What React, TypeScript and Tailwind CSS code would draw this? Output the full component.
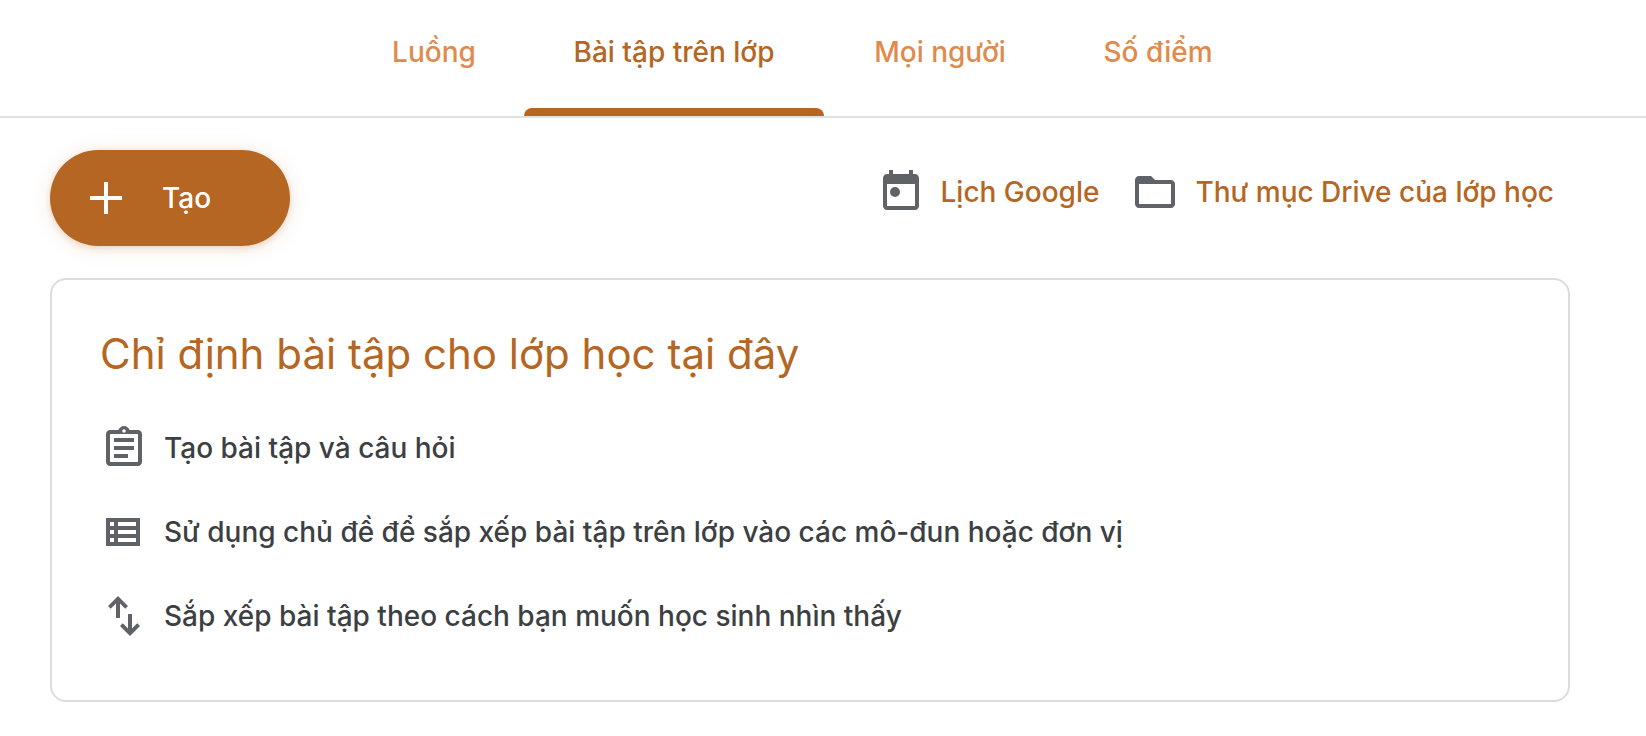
import React from "react";

type IconProps = { children: React.ReactNode };

function Icon({ children }: IconProps) {
  return (
    <svg viewBox="0 0 24 24" className="size-12 shrink-0 fill-[#5f6368]" fillRule="evenodd" aria-hidden="true">
      {children}
    </svg>
  );
}

const tabs = [
  { label: "Luồng", width: "w-[180px]", active: false },
  { label: "Bài tập trên lớp", width: "w-[300px]", active: true },
  { label: "Mọi người", width: "w-[232px]", active: false },
  { label: "Số điểm", width: "w-[204px]", active: false },
];

const links = [
  {
    label: "Lịch Google",
    icon: (
      <>
        <path d="M19 3h-1V1h-2v2H8V1H6v2H5c-1.1 0-2 .9-2 2v14c0 1.1.9 2 2 2h14c1.1 0 2-.9 2-2V5c0-1.1-.9-2-2-2zm0 16H5V8h14v11z" />
        <circle cx="9" cy="12" r="2.5" />
      </>
    ),
  },
  {
    label: "Thư mục Drive của lớp học",
    icon: (
      <path d="M10 4H4c-1.1 0-2 .9-2 2v12c0 1.1.9 2 2 2h16c1.1 0 2-.9 2-2V8c0-1.1-.9-2-2-2h-8l-2-2zM4 8h16v10H4V8z" />
    ),
  },
];

const steps = [
  {
    label: "Tạo bài tập và câu hỏi",
    icon: (
      <path d="M7 15h7v2H7zM7 11h10v2H7zM7 7h10v2H7zM19 3h-4.18C14.4 1.84 13.3 1 12 1s-2.4.84-2.82 2H5c-1.1 0-2 .9-2 2v14c0 1.1.9 2 2 2h14c1.1 0 2-.9 2-2V5c0-1.1-.9-2-2-2zM12 2.6a.9.9 0 1 1 0 1.8.9.9 0 0 1 0-1.8zM19 19H5V5h14v14z" />
    ),
  },
  {
    label: "Sử dụng chủ đề để sắp xếp bài tập trên lớp vào các mô-đun hoặc đơn vị",
    icon: (
      <path d="M3 5v14h17V5H3zM5 7h2v2H5zM9 7h9v2H9zM5 11h2v2H5zM9 11h9v2H9zM5 15h2v2H5zM9 15h9v2H9z" />
    ),
  },
  {
    label: "Sắp xếp bài tập theo cách bạn muốn học sinh nhìn thấy",
    icon: (
      <path d="M9 2L4 7l1.4 1.4L8 5.8V13h2V5.8l2.6 2.6L14 7zM15 22l5-5-1.4-1.4-2.6 2.6V11h-2v7.2l-2.6-2.6L10 17z" />
    ),
  },
];

export default function App() {
  return (
    <div className="min-h-screen bg-white font-['Inter','Noto_Sans',sans-serif] text-[28px] leading-9 font-medium text-[#3c4043]">
      <nav className="flex h-[118px] justify-center border-b-2 border-[#e0e0e0] pr-[42px]">
        {tabs.map((tab) => (
          <a
            key={tab.label}
            href="#"
            aria-current={tab.active ? "page" : undefined}
            className={`flex flex-col justify-between pt-[34px] text-center whitespace-nowrap ${tab.width} ${
              tab.active ? "text-[#b56623]" : "text-[#e08a4b]"
            }`}
          >
            {tab.label}
            {tab.active && <span className="h-2 rounded-t-lg bg-[#b56623]" />}
          </a>
        ))}
      </nav>

      <main className="mr-[76px] ml-[50px] pt-8 pb-8">
        <div className="flex items-start justify-between">
          <button
            type="button"
            className="flex h-24 w-60 items-center gap-10 rounded-full bg-[#b56623] pl-10 text-white shadow-[0_2px_6px_rgba(181,102,35,0.2),0_2px_20px_rgba(181,102,35,0.15)]"
          >
            <svg viewBox="0 0 16 16" className="size-8 fill-white" aria-hidden="true">
              <path d="M7 0h2v7h7v2H9v7H7V9H0V7h7z" />
            </svg>
            Tạo
          </button>
          <div className="flex gap-8 pt-[18px] pr-4">
            {links.map((link) => (
              <a key={link.label} href="#" className="flex items-center gap-4 whitespace-nowrap text-[#b56623]">
                <Icon>{link.icon}</Icon>
                {link.label}
              </a>
            ))}
          </div>
        </div>

        <section className="mt-8 rounded-2xl border-2 border-[#dadce0] px-12 pt-[42px] pb-[60px]">
          <h1 className="text-[42px] leading-[64px] font-normal text-[#b56623]">
            Chỉ định bài tập cho lớp học tại đây
          </h1>
          <ul className="mt-[38px] flex flex-col gap-9">
            {steps.map((step) => (
              <li key={step.label} className="flex items-center gap-4">
                <Icon>{step.icon}</Icon>
                {step.label}
              </li>
            ))}
          </ul>
        </section>
      </main>
    </div>
  );
}
